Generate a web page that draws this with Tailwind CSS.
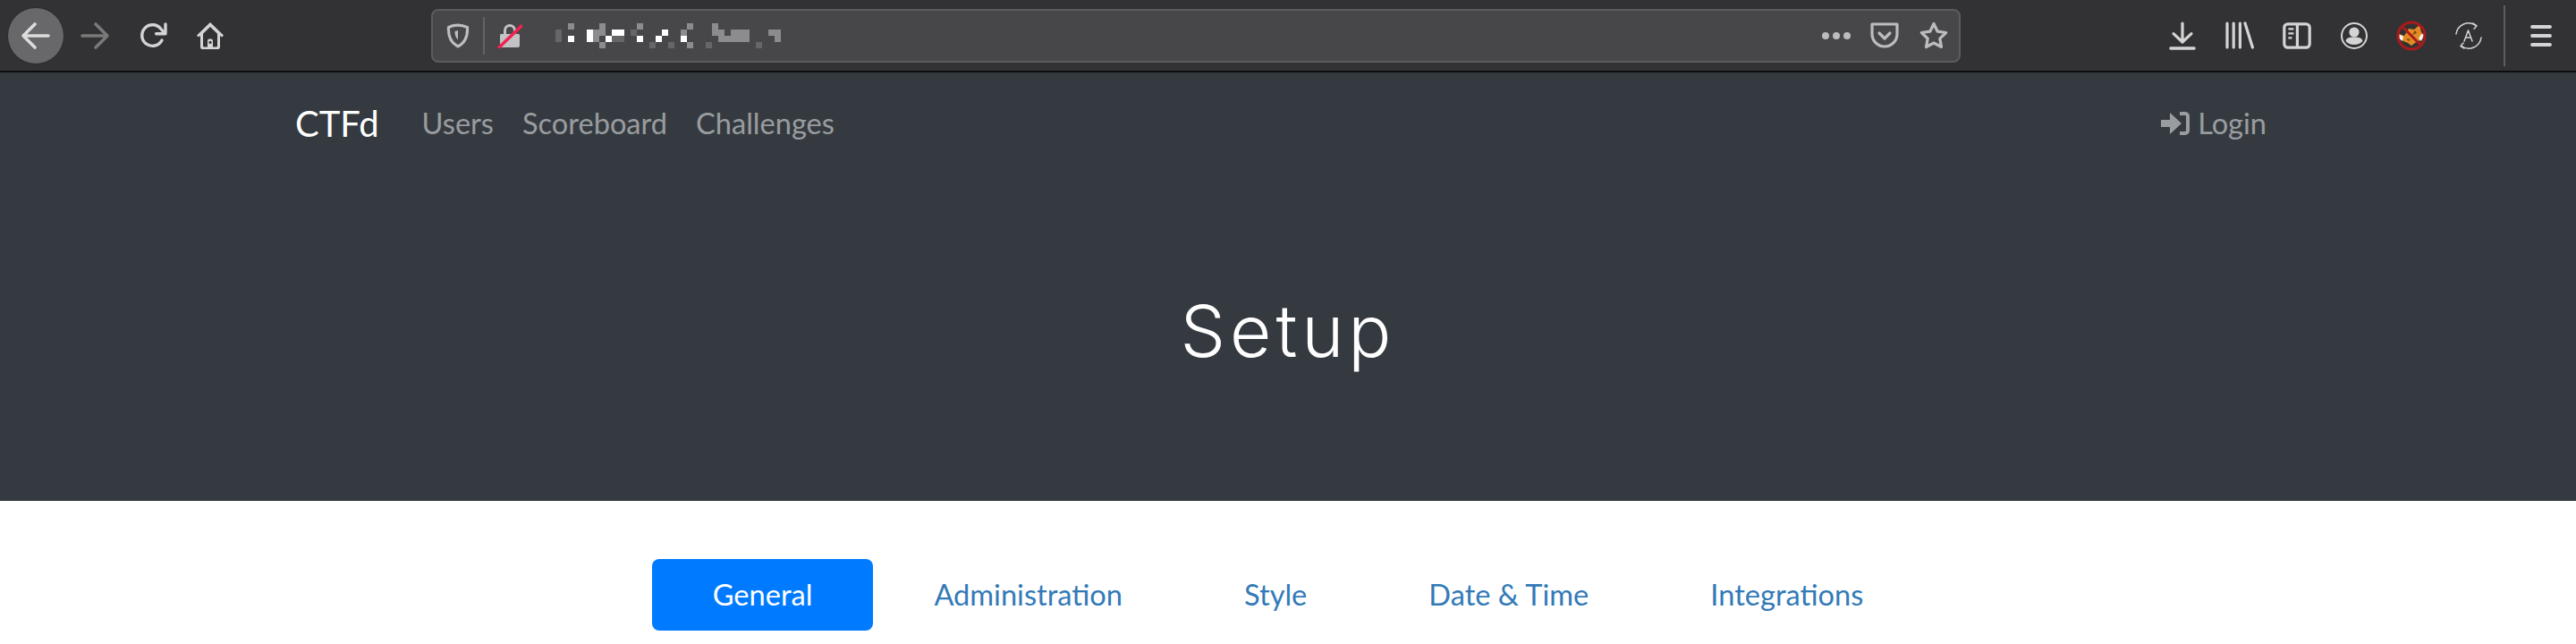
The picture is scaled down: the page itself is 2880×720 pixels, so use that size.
<!DOCTYPE html>
<html lang="en">
<head>
    <meta charset="UTF-8">
    <title>CTFd Setup</title>
    <script src="https://cdn.jsdelivr.net/npm/@tailwindcss/browser@4"></script>
</head>
<body class="bg-white font-['Lato',sans-serif] overflow-hidden">
    <!-- Browser toolbar -->
    <div class="h-[79px] bg-[#323234] flex items-center pl-2 text-[#d4d4d5]">
        <div class="w-16 h-16 rounded-full bg-[#68686a] border border-[#2a2a2b] flex items-center justify-center">
            <svg class="w-9 h-9" viewBox="0 0 18 18" fill="none" stroke="#dcdcdc" stroke-width="1.8" stroke-linecap="round" stroke-linejoin="round"><path d="M2 9h14M8.500 2.500 2 9l6.500 6.500"/></svg>
        </div>
        <div class="w-[68px] h-16 flex items-center justify-center">
            <svg class="w-9 h-9" viewBox="0 0 18 18" fill="none" stroke="#79797a" stroke-width="1.800" stroke-linecap="round" stroke-linejoin="round"><path d="M2 9h14M9.500 2.500 16 9l-6.500 6.500"/></svg>
        </div>
        <div class="w-[62px] h-16 flex items-center justify-center">
            <svg class="w-8 h-8" viewBox="0 0 16 16" fill="none" stroke="#d4d4d5" stroke-width="1.700" stroke-linecap="round" stroke-linejoin="round"><path d="M13 10.500A5.900 5.900 0 1 1 12.300 4L14.500 6.500"/><path d="M15 1.500v5.400H9.800"/></svg>
        </div>
        <div class="w-[66px] h-16 flex items-center justify-center">
            <svg class="w-8 h-8" viewBox="0 0 16 16" fill="#d4d4d5"><path d="M8 0.500 0.500 7.700l.9 1.100L2.500 8v6.200c0 .8.600 1.300 1.300 1.300h8.400c.7 0 1.300-.5 1.300-1.300V8l1.100.8.9-1.100zM12 13.800a.4.4 0 0 1-.4.4H9.500v-3.400a1 1 0 0 0-1-1h-1a1 1 0 0 0-1 1v3.400H4.400a.4.4 0 0 1-.4-.4V6.900l4-3.900 4 3.900z"/><rect x="7.300" y="11" width="1.400" height="1.400" fill="#323234"/></svg>
        </div>
        <!-- URL bar -->
        <div class="ml-[214px] w-[1710px] h-[60px] rounded-lg border-2 border-[#5c5c5e] bg-[#474749] flex items-center shrink-0">
            <div class="w-14 flex justify-center">
                <svg class="w-7 h-7" viewBox="0 0 16 16" fill="none"><path d="M8 1.200c2 0 4.200.6 6 1.400.3 5.200-1 9.700-6 12.200C3 12.300 1.700 7.800 2 2.600c1.800-.8 4-1.400 6-1.400z" stroke="#bdbdbf" stroke-width="1.800" stroke-linejoin="round"/><path d="M8 4.500 6 5.200c0 2.200.5 4 2 5.300z" fill="#bdbdbf"/></svg>
            </div>
            <div class="w-0.5 h-[42px] bg-[#636366]"></div>
            <div class="w-[56px] flex justify-center">
                <svg class="w-7 h-7" viewBox="0 0 28 28"><path d="M4 12h20a2 2 0 0 1 1 2v11a2 2 0 0 1-2 2H5a2 2 0 0 1-2-2V14a2 2 0 0 1 1-2zM7 12V8a7 7 0 0 1 14 0v4h-3V8a4 4 0 0 0-8 0v4z" fill="#c3c3c5"/><path d="M2 27 27 3" stroke="#f0224f" stroke-width="3.500" stroke-linecap="round"/></svg>
            </div>
            <!-- address is pixelated in the shot -->
            <svg class="ml-[23px] w-[252px] h-7 shrink-0" viewBox="0 0 252 28" shape-rendering="crispEdges">
                <g fill="#8c8c8e">
                    <rect x="14" y="0" width="7" height="7"/><rect x="49" y="0" width="7" height="7"/><rect x="91" y="0" width="7" height="7"/><rect x="147" y="0" width="7" height="7"/><rect x="175" y="0" width="7" height="7"/>
                    <rect x="49" y="7" width="7" height="7"/><rect x="42" y="7" width="7" height="7"/><rect x="140" y="7" width="7" height="7"/><rect x="175" y="7" width="14" height="7"/><rect x="196" y="7" width="21" height="7"/><rect x="238" y="7" width="14" height="7"/>
                    <rect x="182" y="14" width="35" height="7"/><rect x="245" y="14" width="7" height="7"/><rect x="42" y="14" width="7" height="7"/>
                    <rect x="49" y="21" width="7" height="7"/><rect x="147" y="21" width="7" height="7"/>
                </g>
                <g fill="#666668">
                    <rect x="0" y="7" width="7" height="7"/><rect x="0" y="14" width="7" height="7"/><rect x="84" y="7" width="7" height="7"/><rect x="63" y="14" width="14" height="7"/><rect x="105" y="21" width="7" height="7"/><rect x="126" y="21" width="7" height="7"/><rect x="168" y="21" width="7" height="7"/><rect x="224" y="21" width="7" height="7"/>
                </g>
                <g fill="#ffffff">
                    <rect x="35" y="7" width="7" height="14"/><rect x="63" y="7" width="14" height="7"/><rect x="119" y="7" width="7" height="7"/><rect x="14" y="14" width="7" height="7"/><rect x="56" y="14" width="7" height="7"/><rect x="91" y="14" width="7" height="7"/><rect x="112" y="14" width="7" height="7"/><rect x="140" y="14" width="7" height="7"/>
                </g>
            </svg>
            <div class="flex-1"></div>
            <div class="flex items-center gap-[4px] mr-[22px]">
                <span class="w-[8px] h-[8px] rounded-full bg-[#bcbcbe]"></span>
                <span class="w-[8px] h-[8px] rounded-full bg-[#bcbcbe]"></span>
                <span class="w-[8px] h-[8px] rounded-full bg-[#bcbcbe]"></span>
            </div>
            <svg class="w-8 h-8 mr-[23px]" viewBox="0 0 32 32" fill="none" stroke="#bcbcbe" stroke-linejoin="round" stroke-linecap="round"><path d="M2 3h28v11a14 14 0 0 1-28 0z" stroke-width="3.200"/><path d="M10 13l6 6 6-6" stroke-width="3.200"/></svg>
            <svg class="w-8 h-8 mr-[12px]" viewBox="0 0 32 32" fill="none" stroke="#bcbcbe" stroke-width="3.200" stroke-linejoin="round"><path d="M16 2.500l4.200 8.700 9.500 1.300-6.900 6.600 1.700 9.400L16 24l-8.500 4.500 1.700-9.400-6.900-6.600 9.500-1.300z"/></svg>
        </div>
        <!-- Right side icons -->
        <div class="ml-[216px] flex items-center shrink-0">
            <div class="w-16 flex justify-center">
                <svg class="w-8 h-8" viewBox="0 0 16 16" fill="none" stroke="#d4d4d5" stroke-width="1.600" stroke-linecap="round" stroke-linejoin="round"><path d="M8 1v10M3 6.800 8 11.500l5-4.700"/><path d="M1.500 15h13" stroke-width="1.800"/></svg>
            </div>
            <div class="w-16 flex justify-center">
                <svg class="w-8 h-8" viewBox="0 0 16 16" fill="none" stroke="#d4d4d5" stroke-width="1.600" stroke-linecap="round"><path d="M1 1v13.500M4.600 1v13.500M8.200 1v13.500M11 1l4.200 13.500"/></svg>
            </div>
            <div class="w-16 flex justify-center">
                <svg class="w-8 h-8" viewBox="0 0 16 16" fill="none" stroke="#d4d4d5"><rect x="0.900" y="1.400" width="14.200" height="13.200" rx="2" stroke-width="1.600"/><path d="M8.200 1.400v13.200" stroke-width="1.600"/><path d="M3.200 4.200h3M3.200 6.700h3M3.200 9.200h2" stroke-width="1.100"/></svg>
            </div>
            <div class="w-16 flex justify-center">
                <svg class="w-8 h-8" viewBox="0 0 16 16" fill="none"><circle cx="8" cy="8" r="7" stroke="#d4d4d5" stroke-width="1"/><circle cx="8" cy="6" r="2.800" fill="#d4d4d5"/><path d="M3.300 11c0-1.500 1.800-2.200 4.700-2.200s4.700.7 4.700 2.200c-1 1.300-2.800 2-4.700 2s-3.700-.7-4.700-2z" fill="#d4d4d5"/></svg>
            </div>
            <div class="w-16 flex justify-center">
                <svg class="w-[34px] h-[34px]" viewBox="0 0 34 34" fill="none"><path d="M3 15l6 2 5-8 6 1 6-5 2 8 3 3-2 5-8 4-4 3-4-3-5-2z" fill="#e48a23"/><path d="M3 15l5 3-1 5-4-3zM31 16l-3 7-3-3 3-5z" fill="#f5f5f5"/><path d="M11 20l5 1-2 2zM21 11l-3 5 5-2z" fill="#7a4a10"/><circle cx="17" cy="17" r="15" stroke="#a81b1b" stroke-width="3"/><path d="M7 7l20 20" stroke="#a81b1b" stroke-width="3"/></svg>
            </div>
            <div class="w-16 flex justify-center">
                <svg class="w-8 h-8" viewBox="0 0 32 32" fill="none" stroke="#d4d4d5" stroke-linecap="round" stroke-linejoin="round" stroke-width="1.500"><path d="M2 14A14 14 0 0 1 24 4.500M30 18A14 14 0 0 1 8 27.500"/><path d="M21 2l4 2.800-3 3.400M11 30l-4-2.500 3-3.500"/><path d="M11 22 15.500 10 20 22M12.500 18h6"/></svg>
            </div>
        </div>
        <div class="ml-[7px] w-0.5 h-[68px] bg-[#5e5e60]"></div>
        <div class="ml-[28px]">
            <svg class="w-6 h-6" viewBox="0 0 24 24" stroke="#d4d4d5" stroke-width="3.800" stroke-linecap="round"><path d="M2 2h20M2 12h20M2 22h20"/></svg>
        </div>
    </div>
    <div class="h-[2px] bg-[#0c0c0d]"></div>

    <!-- Hero with navbar -->
    <div class="h-[479px] bg-[#343a40] flex flex-col">
        <nav class="w-[2220px] mx-auto h-[114px] flex items-center shrink-0">
            <a class="text-[40px] leading-[60px] text-white mr-8">CTFd</a>
            <a class="px-4 text-[32.6px] text-white/50">Users</a>
            <a class="px-4 text-[32.6px] text-white/50">Scoreboard</a>
            <a class="px-4 text-[32.6px] text-white/50">Challenges</a>
            <a class="ml-auto px-4 text-[32.6px] text-white/50 flex items-center gap-[9px]">
                <svg class="w-8 h-8" viewBox="0 0 32 32" fill="#9a9da0"><path d="M0 12h10V4l13 12-13 12v-8H0zM21 3h6a5 5 0 0 1 5 5v16a5 5 0 0 1-5 5h-6v-4h6a1 1 0 0 0 1-1V8a1 1 0 0 0-1-1h-6z"/></svg>
                Login
            </a>
        </nav>
        <div class="flex-1 flex items-center justify-center pb-[16px]">
            <h1 class="font-['Inter',sans-serif] text-[80px] leading-[120px] font-light tracking-[5px] text-white">Setup</h1>
        </div>
    </div>

    <!-- Setup tabs -->
    <div class="pt-[65px] flex justify-center text-[32.6px] leading-[48px] text-[#337ab7]">
        <a class="px-[68px] py-4 rounded-lg bg-[#007bff] text-white">General</a>
        <a class="px-[68px] py-4">Administration</a>
        <a class="px-[68px] py-4">Style</a>
        <a class="px-[68px] py-4">Date &amp; Time</a>
        <a class="px-[68px] py-4">Integrations</a>
    </div>
</body>
</html>
